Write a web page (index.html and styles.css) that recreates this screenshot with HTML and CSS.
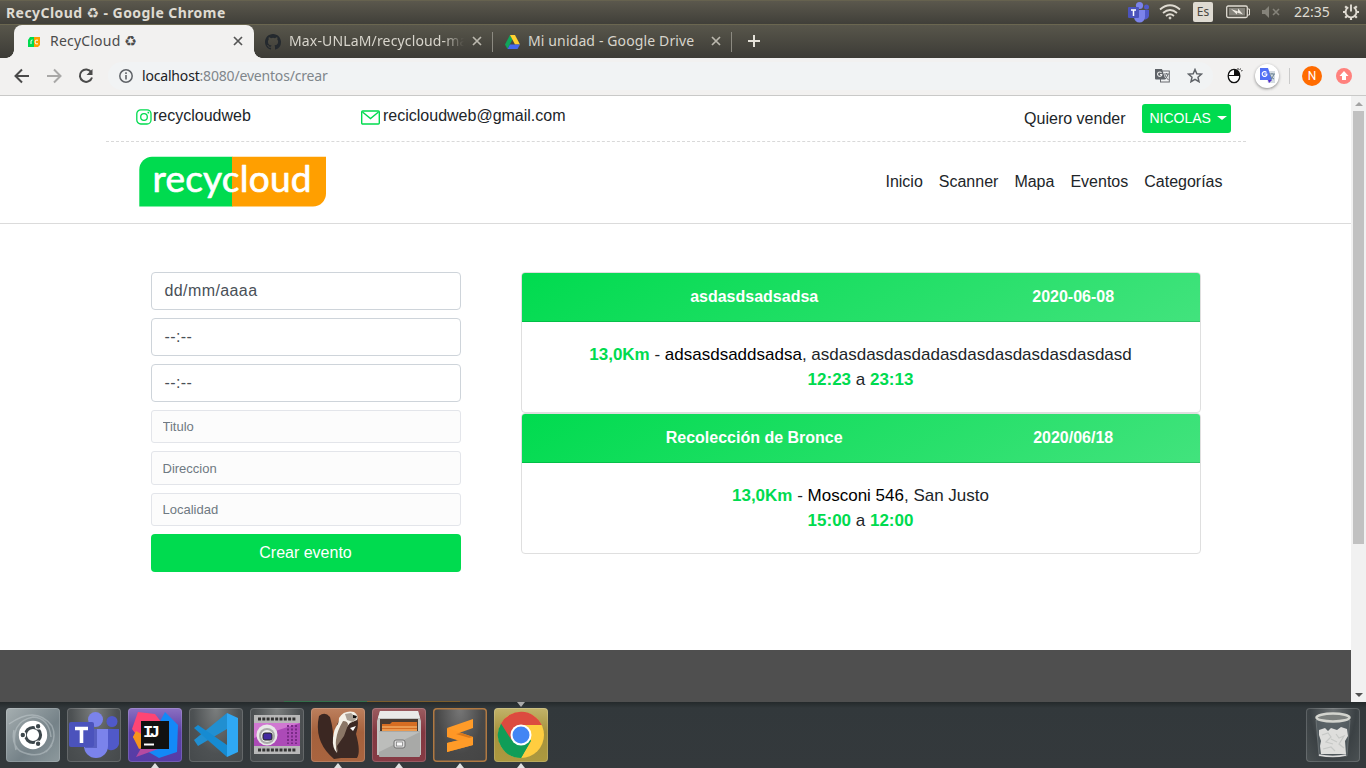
FILE: index.html
```html
<!DOCTYPE html>
<html lang="es">
<head>
<meta charset="utf-8">
<title>RecyCloud</title>
<link rel="stylesheet" href="styles.css">
</head>
<body>
<div class="desktop">
  <header class="titlebar">
    <span class="window-title">RecyCloud <i class="recycle">♻</i> - Google Chrome</span>
    <div class="indicators">
      <svg class="ind teams" width="24" height="22" viewBox="0 0 24 22"><circle cx="19.500" cy="6" r="2.500" fill="#5059c9"/><path d="M15 9h7v6a4 4 0 0 1-7 2z" fill="#5059c9"/><circle cx="12.500" cy="4.500" r="3.600" fill="#7b83eb"/><path d="M7 9h11v7a5.500 5.500 0 0 1-11 0z" fill="#7b83eb"/><rect x="1" y="6" width="11" height="11" rx="1" fill="#4b53bc"/><path d="M4 9h5M6.500 9v6" stroke="#fff" stroke-width="1.500"/></svg>
      <svg class="ind wifi" width="22" height="16" viewBox="0 0 22 16" fill="none" stroke="#dfdbd2" stroke-width="1.800"><path d="M1 5.500Q11-3 21 5.500M4 9Q11 3 18 9M7 12Q11 8.500 15 12"/><circle cx="11" cy="14" r="1" fill="#dfdbd2" stroke-width="1"/></svg>
      <span class="lang">Es</span>
      <svg class="ind battery" width="24" height="14" viewBox="0 0 24 14"><rect x=".7" y="1" width="20.600" height="11.500" rx="1.500" fill="none" stroke="#dfdbd2" stroke-width="1.300"/><path d="M22 4h1.500v6H22" fill="none" stroke="#dfdbd2"/><rect x="3" y="3" width="16" height="7.500" fill="#85837b"/><path d="M5 4l7 2.500V3.500l5 6-6-2v2z" fill="#eeeae2"/></svg>
      <svg class="ind sound" width="18" height="14" viewBox="0 0 18 14"><path d="M0 5h3l4-4v12L3 9H0z" fill="#85837a"/><path d="M11 4l6 6M17 4l-6 6" stroke="#85837a" stroke-width="1.600"/></svg>
      <span class="clock">22:35</span>
      <svg class="ind gear" width="18" height="18" viewBox="0 0 18 18" fill="none" stroke="#dfdbd2"><path d="M6.300 4.300a5.400 5.400 0 1 0 5.400 0M9 1.500v7" stroke-width="1.900"/><path d="M1 9h2.500M14.500 9H17M3.200 3.200l1.800 1.800M14.800 3.200L13 5M3.200 14.800L5 13M14.800 14.800L13 13M9 14.500V17" stroke-width="2.200"/></svg>
    </div>
  </header>

  <nav class="tabstrip">
    <div class="tab active">
      <svg width="14" height="12" viewBox="0 0 14 12"><path d="M3 1h4v10H1V4z" fill="#00db4f"/><path d="M7 1h6v8l-2 2H7z" fill="#ff9f00"/><path d="M4 8V5q0-1 1.500-1M11 4.200q-3-1-3 1.800t3 1.800" fill="none" stroke="#fff"/></svg>
      <span class="tab-label t1">RecyCloud <i class="recycle">♻</i></span>
      <svg class="close" width="10" height="10" viewBox="0 0 10 10"><path d="M1 1l8 8M9 1L1 9"/></svg>
    </div>
    <div class="tab second">
      <svg width="16" height="16" viewBox="0 0 16 16"><path fill="#24292e" d="M8 0C3.580 0 0 3.580 0 8c0 3.540 2.290 6.530 5.470 7.590.4.070.55-.17.55-.38 0-.19-.01-.82-.01-1.490-2.010.37-2.530-.49-2.690-.94-.09-.23-.48-.94-.82-1.130-.28-.15-.68-.52-.01-.53.63-.01 1.080.58 1.230.82.72 1.210 1.870.87 2.330.66.07-.52.28-.87.51-1.070-1.780-.2-3.640-.89-3.640-3.950 0-.87.31-1.590.82-2.150-.08-.2-.36-1.020.08-2.120 0 0 .67-.21 2.200.82a7.400 7.400 0 0 1 4 0c1.530-1.040 2.200-.82 2.200-.82.44 1.100.16 1.920.08 2.120.51.560.82 1.270.82 2.150 0 3.070-1.870 3.750-3.650 3.950.29.250.54.730.54 1.480 0 1.070-.01 1.930-.01 2.200 0 .21.15.46.55.38A8.010 8.010 0 0 0 16 8c0-4.420-3.580-8-8-8z"/></svg>
      <span class="tab-label faded">Max-UNLaM/recycloud-ma</span>
      <svg class="close" width="10" height="10" viewBox="0 0 10 10"><path d="M1 1l8 8M9 1L1 9"/></svg>
    </div>
    <div class="tab third">
      <svg width="15" height="14" viewBox="0 0 15 14"><path d="M5 0l2.500 4.500L2.500 14 0 9.500z" fill="#11a55a"/><path d="M5 0h5l5 9.500h-5z" fill="#ffd12f"/><path d="M5 9.500h10L12.500 14h-10z" fill="#4568ee"/></svg>
      <span class="tab-label t3">Mi unidad - Google Drive</span>
      <svg class="close" width="10" height="10" viewBox="0 0 10 10"><path d="M1 1l8 8M9 1L1 9"/></svg>
    </div>
    <svg class="newtab" width="12" height="12" viewBox="0 0 12 12"><path d="M6 0v12M0 6h12" stroke="#e5e2d9" stroke-width="2"/></svg>
  </nav>

  <div class="toolbar">
    <svg class="tb" width="16" height="16" viewBox="0 0 16 16"><path d="M15 8H2M8 1.500L1.500 8 8 14.500"/></svg>
    <svg class="tb dim" width="16" height="16" viewBox="0 0 16 16"><path d="M1 8h13M8 1.500L14.500 8 8 14.500"/></svg>
    <svg class="tb" width="16" height="16" viewBox="0 0 16 16"><path d="M13.300 4.300A6.200 6.200 0 1 0 14 9.500"/><path d="M14.500 1v6h-6z" fill="#4a4a4a" stroke="none"/></svg>
    <div class="omnibox">
      <svg width="14" height="14" viewBox="0 0 14 14"><circle cx="7" cy="7" r="6.200" fill="none" stroke="#5f6368" stroke-width="1.500"/><path d="M7 6v4.500M7 3.200V5" stroke="#5f6368" stroke-width="1.600"/></svg>
      <span class="url"><b>localhost</b>:8080/eventos/crear</span>
      <svg class="translate" width="15" height="15" viewBox="0 0 15 15"><rect x="5.500" y="3" width="8.800" height="11" fill="#f1f3f4" stroke="#686b70"/><path d="M0 1h7l3.500 10.500H1q-1 0-1-1z" fill="#5f6368"/><path d="M6.500 4.800A2.200 2.200 0 1 0 6.800 7V6.500H5" fill="none" stroke="#eee" stroke-width="1.100"/><path d="M9 6h5M11.500 5v1M13 6q-1 4-3 5M10 7q1 3 3.500 5" fill="none" stroke="#686b70"/></svg>
      <svg class="star" width="16" height="15" viewBox="0 0 16 15"><path d="M8 1.500l1.800 4.200 4.700.4-3.500 3.100 1 4.500-4-2.400-4 2.400 1-4.500L1.500 6.100l4.700-.4z" fill="none" stroke="#5f6368" stroke-width="1.500"/></svg>
    </div>
    <svg class="mouse" width="16" height="17" viewBox="0 0 16 17"><ellipse cx="7" cy="9" rx="5.800" ry="6.700" fill="#fff" stroke="#111" stroke-width="1.300"/><path d="M7 2.500v6h6A6 6 0 0 0 7 2.500z" fill="#111"/><path d="M1.500 8.500h11" stroke="#111"/><path d="M11 1v2M13.500 1.500l-.7 1.500M15.500 3.500l-1.500.5" stroke="#333"/></svg>
    <span class="ext"><svg width="17" height="17" viewBox="0 0 17 17"><path d="M6 4h10v12H9z" fill="#d5dce2"/><path d="M1 1h8l4 12H1z" fill="#5270f5"/><path d="M7.500 5.500a2.400 2.400 0 1 0 .3 2.500V7H5.300" fill="none" stroke="#fff" stroke-width="1.200"/><path d="M10 7h6M13 6v1M15 7q-1 4-4 6M11 8q1 3 4 4" fill="none" stroke="#6d8593"/><path d="M9 13h4l-3 3z" fill="#4d2bd0"/></svg></span>
    <span class="sep"></span>
    <span class="avatar">N</span>
    <span class="update"><svg width="10" height="10" viewBox="0 0 10 10"><path d="M5 0l4.500 5H7v4H3V5H.5z" fill="#fff"/></svg></span>
  </div>

  <div class="viewport">
    <main class="page">
      <div class="top-row">
        <span class="contact insta"><svg width="16" height="16" viewBox="0 0 16 16" fill="none" stroke="#00db4f" stroke-width="1.300"><rect x=".8" y=".8" width="14.200" height="14.200" rx="4"/><circle cx="8" cy="8" r="3.300"/><path d="M11.500 3.500h1v1"/></svg>recycloudweb</span>
        <span class="contact mail"><svg width="19" height="15" viewBox="0 0 19 15" fill="none" stroke="#00db4f" stroke-width="1.400"><rect x=".7" y="1" width="17.600" height="13" rx="1"/><path d="M1.500 2l8 6.500 8-6.500"/></svg>recicloudweb@gmail.com</span>
        <span class="sell">Quiero vender</span>
        <button class="user">NICOLAS<i class="caret"></i></button>
      </div>
      <div class="brand-band">
        <div class="brand-row">
          <svg class="logo" width="188" height="51" viewBox="0 0 188 51"><path d="M13 .7H93.500V50.500H.3V13.500A13 13 0 0 1 13 .7z" fill="#00db4f"/><path d="M93 .7h94v36.800a13 13 0 0 1-13 13H93z" fill="#ff9f00"/><text class="logo-text" x="13.500" y="35.700" textLength="159">recycloud</text></svg>
          <nav class="menu"><a>Inicio</a><a>Scanner</a><a>Mapa</a><a>Eventos</a><a>Categorías</a></nav>
        </div>
      </div>
      <div class="content">
        <form class="form">
          <div class="field date">dd/mm/aaaa</div>
          <div class="field">--:--</div>
          <div class="field">--:--</div>
          <input class="small" placeholder="Titulo">
          <input class="small street" placeholder="Direccion">
          <input class="small" placeholder="Localidad">
          <button class="submit" type="button">Crear evento</button>
        </form>
        <section class="cards">
          <article class="card">
            <h2 class="card-head"><span>asdasdsadsadsa</span><span>2020-06-08</span></h2>
            <div class="card-body"><p><b>13,0Km</b> - <em>adsasdsaddsadsa</em>, asdasdasdasdadasdasdasdasdasdasdasd</p><p><b>12:23</b> a <b>23:13</b></p></div>
          </article>
          <article class="card">
            <h2 class="card-head"><span>Recolección de Bronce</span><span>2020/06/18</span></h2>
            <div class="card-body"><p><b>13,0Km</b> - <em>Mosconi 546</em>, San Justo</p><p><b>15:00</b> a <b>12:00</b></p></div>
          </article>
        </section>
      </div>
      <footer class="footer"><span class="footer-line"></span></footer>
    </main>
    <div class="scrollbar"><i class="up"></i><i class="thumb"></i><i class="down"></i></div>
  </div>

  <div class="dock">
    <span class="tile dash"><svg viewBox="0 0 54 54"><g fill="none" stroke="#d3dadd" stroke-opacity=".4" stroke-width="1.500"><path d="M10 42Q3 14 27 9q16 1 18 20M3 16Q30-3 46 18 52 32 40 44M46 37Q35 53 14 43 5 36 8 22"/></g><circle cx="27" cy="27" r="14.200" fill="#fff"/><circle cx="27" cy="27" r="7.600" fill="none" stroke="#3d474c" stroke-width="3"/><g fill="#3d474c" stroke="#fff" stroke-width="1.200"><circle cx="16.800" cy="27" r="2.800"/><circle cx="32.100" cy="18.200" r="2.800"/><circle cx="32.100" cy="35.800" r="2.800"/></g></svg></span>
    <span class="tile glass"><svg viewBox="0 0 54 54"><circle cx="45" cy="13.500" r="5.500" fill="#5059c9"/><path d="M36 21h16v15a8 8 0 0 1-12 5z" fill="#5059c9"/><circle cx="28.500" cy="11.500" r="7.500" fill="#7b83eb"/><path d="M17 21h24v17a12 12 0 0 1-24 0z" fill="#7b83eb"/><path d="M20 21h10v19H18z" fill="#4047a5" opacity=".6"/><rect x="2" y="14" width="25" height="25" rx="2" fill="#4b53bc"/><path d="M8 20.500h13M14.500 20v15" stroke="#fff" stroke-width="3.600"/></svg></span>
    <span class="tile idea"><svg viewBox="0 0 54 54"><path d="M37 4l13 13-1 27-18 6-14-8z" fill="#1389f7"/><path d="M8 24l8 15-5 2-6-12z" fill="#f7941d"/><path d="M10 4l17 2 10 13-8 20-13-2-12-16z" fill="#fe4574"/><path d="M5 29l3-6 7 4-2 14z" fill="#f7941d"/><path d="M8 49l8-14 14 6z" fill="#b54aa1"/><rect x="13" y="13" width="28" height="28" fill="#111"/><text class="ij" x="15" y="29" textLength="17">IJ</text><path d="M16 36.500h10" stroke="#fff" stroke-width="2"/></svg><i class="run"></i></span>
    <span class="tile glass"><svg viewBox="0 0 54 54"><path d="M38 5L5 32l4 6 29-17z" fill="#218fd1"/><path d="M9 17l-4 3 33 29V37z" fill="#168bd2"/><path d="M38 5l11 5v34l-11 5z" fill="#2fa8f4"/></svg></span>
    <span class="tile glass"><svg viewBox="0 0 54 54"><rect x="4" y="7" width="46" height="39" fill="#b8b8b8"/><path d="M8 11h38M8 42h38" stroke="#333" stroke-width="3" stroke-dasharray="3 1.300"/><rect x="4" y="15" width="46" height="23" fill="#ac4ab7"/><path d="M4 15h46L4 30z" fill="#d078d1"/><path d="M38 17v19M42 17v19M46 17v19" stroke="#792b86" stroke-width="2" stroke-dasharray="2 1.500"/><circle cx="17" cy="27" r="10.500" fill="#e8e8e8"/><circle cx="17" cy="28" r="8" fill="#aaa"/><circle cx="17" cy="28" r="6" fill="#eee"/><rect x="13" y="25" width="9" height="7" rx="2" fill="#432aa0" stroke="#222"/></svg></span>
    <span class="tile beaver"><svg viewBox="0 0 54 54"><path d="M8 8q6-5 11 1 4 14 3 26 1 11 8 15l-7 1Q5 36 7 14z" fill="#3b2722"/><path d="M30 9Q36 1 45 6q4 8 0 20 5 18 1 24H29q-8-2-7-13 0-15 8-28z" fill="#3c2924"/><path d="M28 10Q33 2 43 4q5 3 3 8l-7 3-8 10q-6 8-6 14l1 6q-5-5-4-15 1-10 5-14 1-3 1-6z" fill="#f5f1e8"/><path d="M32 13q5 0 5 4l-4 11-7 10 1 7q-3-6-2-13 1-9 7-19z" fill="#8a7666"/><path d="M34 6l6-1 6 5-4 4-6-2z" fill="#aaa095"/><path d="M42 7l4 1-1 2h-3z" fill="#111"/><path d="M39 20l6-2-3 5z" fill="#fff"/></svg><i class="run"></i></span>
    <span class="tile files"><svg viewBox="0 0 54 54"><path d="M8 3h38l3 10v34H5V13z" fill="#c4c4c2"/><path d="M8 3h38l2 7H6z" fill="#e9e9e7"/><rect x="8" y="11" width="38" height="14" fill="#493b32"/><path d="M10 16h8l2-2h25v9H10z" fill="#d66d22"/><path d="M10 19h35M10 22h35" stroke="#ffc77f"/><rect x="7" y="23" width="41" height="26" rx="1" fill="#a8a9a7"/><path d="M7 24h41L7 44z" fill="#bcbdbb"/><rect x="22" y="32" width="11" height="8" rx="2" fill="#ddd" stroke="#707070"/><rect x="24.500" y="34" width="6" height="4" fill="#f8f8f8" stroke="#777" stroke-width=".7"/></svg><i class="run"></i></span>
    <span class="tile sublime"><svg viewBox="0 0 54 54"><path d="M14 20l26-9v9l-17 6z" fill="#ff9b28"/><path d="M14 20l26 9v8l-26-8z" fill="#ff9725"/><path d="M23 26l17 5v-2l-12-4z" fill="#d9771b"/><path d="M14 35l12-3 14 5-26 7z" fill="#f28a1d"/><path d="M14 35l26-6v8l-26 7z" fill="#ff9b28"/></svg><i class="run"></i></span>
    <span class="tile chrome"><svg viewBox="0 0 54 54"><circle cx="27" cy="27" r="23" fill="#ffcd40"/><path d="M27 27L7 15.500A23 23 0 0 0 27 50l10-17z" fill="#109d58"/><path d="M27 17h20.800A23 23 0 0 0 7 15.500L17.500 32z" fill="#dc4b3f"/><path d="M27 50l10-18-10-3-9 5z" fill="#109d58"/><circle cx="27" cy="27" r="10.500" fill="#fff"/><circle cx="27" cy="27" r="8.500" fill="#4285f4"/></svg><i class="run"></i><i class="run top"></i></span>
    <span class="tile glass trash"><svg viewBox="0 0 54 54"><path d="M10 12h34l-3 36H13z" fill="#5d686c" fill-opacity=".6" stroke="#a2a9a9" stroke-opacity=".35"/><path d="M13 22l6-2 3 3 3-3 6 2 4-3 6 2 1 7-3 5 1 13H15l-1-8 1-5-2-6z" fill="#dededc"/><path d="M16 27l6-2 3 4-5 5 7 2M30 26l3 4 5-2-5 8 5 4M25 31l6 3M17 41l8-2 4 4" fill="none" stroke="#c6c8c6" stroke-width="1.200"/><ellipse cx="27" cy="9.500" rx="16.500" ry="4" fill="#7b7f7d" stroke="#d3d4ce" stroke-width="2.500"/><path d="M13 47q14 3 27 0" fill="none" stroke="#ddd" stroke-width="1.500"/></svg></span>
  </div>
</div>
</body>
</html>
```
FILE: styles.css
```css
* { box-sizing: border-box; }
body { margin: 0; overflow: hidden; font-family: "Liberation Sans", Arial, sans-serif; font-size: 16px; line-height: 24px; color: #212529; }
svg { display: block; flex: none; }
i, em { font-style: normal; }
p, h2 { margin: 0; }
.desktop { width: 1366px; height: 768px; display: flex; flex-direction: column; }
.recycle { font-family: "DejaVu Sans", sans-serif; font-weight: 400; }

.titlebar { height: 24px; flex: none; display: flex; align-items: center; justify-content: space-between; padding: 0 7px 0 6px; background: linear-gradient(#5b584d, #403f39); border-top: 1px solid #66624f; font-family: "Noto Sans", sans-serif; color: #dfdbd2; }
.window-title { font-size: 14px; font-weight: 700; letter-spacing: .43px; }
.window-title .recycle { font-size: 14px; }
.indicators { display: flex; align-items: center; margin-top: -2px; }
.lang { width: 20px; height: 20px; margin-left: 12px; border-radius: 2px; background: #dfdbd2; color: #4a4840; font-size: 12px; line-height: 20px; text-align: center; }
.wifi { margin-left: 8px; }
.battery { margin-left: 13px; }
.sound { margin-left: 12px; }
.clock { margin-left: 14px; width: 37px; font-size: 14px; white-space: nowrap; }
.gear { margin-left: 11px; margin-right: -1px; }

.tabstrip { height: 34px; flex: none; display: flex; align-items: center; padding-left: 14px; background: linear-gradient(#58564b, #3c3b36); border-top: 1px solid #6a6650; font-family: "Noto Sans", sans-serif; font-size: 14px; color: #d8d5cc; }
.tab { height: 33px; display: flex; align-items: center; }
.tab-label { white-space: nowrap; overflow: hidden; margin-top: -2px; }
.t1 { letter-spacing: .2px; }
.t3 { letter-spacing: .13px; }
.tab .close { margin-left: auto; margin-top: -1px; fill: none; stroke: #bbb8ae; stroke-width: 1.7; }
.active { position: relative; width: 240px; padding: 0 11px 0 13px; gap: 9px; background: #f2f1f0; color: #4c4c4c; border-radius: 8px 8px 0 0; }
.active::before, .active::after { content: ""; position: absolute; bottom: 0; width: 8px; height: 8px; }
.active::before { left: -8px; background: radial-gradient(circle at 0 0, transparent 7.5px, #f2f1f0 8px); }
.active::after { right: -8px; background: radial-gradient(circle at 100% 0, transparent 7.5px, #f2f1f0 8px); }
.active .close { stroke: #555; }
.second, .third { height: 20px; border-right: 1px solid #8c8a81; }
.second { width: 239px; padding: 0 10px 0 11px; gap: 8px; }
.faded { width: 176px; letter-spacing: .15px; -webkit-mask-image: linear-gradient(90deg, #000 88%, transparent); mask-image: linear-gradient(90deg, #000 88%, transparent); }
.third { width: 239px; padding: 0 10px 0 12px; gap: 8px; }
.newtab { margin-left: 16px; margin-top: -2px; }

.toolbar { height: 38px; flex: none; display: flex; align-items: center; padding: 0 14px 2px; background: #f2f1f0; border-bottom: 1px solid #c9c9c8; font-family: "Noto Sans", sans-serif; }
.tb { fill: none; stroke: #4a4a4a; stroke-width: 2; margin-right: 16px; }
.dim { stroke: #a9a8a7; }
.omnibox { width: 1105px; height: 28px; display: flex; align-items: center; padding: 0 10px 0 11px; margin-left: -2px; border-radius: 14px; background: #f1f3f4; }
.url { margin-left: 9px; font-size: 14px; letter-spacing: -0.18px; color: #80868b; }
.url b { font-weight: 400; color: #202124; }
.translate { margin-left: auto; }
.star { margin-left: 17px; }
.mouse { margin-left: 14px; }
.ext { width: 24px; height: 24px; margin-left: 12px; border-radius: 50%; background: #fff; box-shadow: 0 1px 3px #888; display: grid; place-items: center; }
.sep { width: 1px; height: 16px; margin-left: 10px; background: #cacaca; }
.avatar { width: 20px; height: 20px; margin-left: 12px; border-radius: 50%; background: #ff6b00; color: #fff; font: 12px/20px Roboto, sans-serif; text-align: center; }
.update { width: 16px; height: 16px; margin-left: 14px; border-radius: 50%; background: #ff817d; display: grid; place-items: center; }

.viewport { height: 606px; flex: none; display: flex; background: #fff; }
.page { width: 1351px; display: flex; flex-direction: column; }
.top-row { width: 1140px; height: 46px; margin: 0 auto; padding: 0 15px 0 30px; display: flex; align-items: flex-start; border-bottom: 1px dashed #d9d9d9; }
.contact { display: flex; align-items: center; padding-top: 8px; }
.insta { width: 225px; gap: 1.5px; }
.insta svg, .mail svg { margin-top: 2px; }
.mail { gap: 3.5px; }
.sell { margin-left: auto; padding-top: 11px; }
.user { width: 89px; height: 29px; margin: 8px 0 0 16px; padding: 0 4px 1px 8px; display: flex; align-items: center; justify-content: space-between; border: 0; border-radius: 3px; background: #00db4f; color: #fff; font: 14px "Liberation Sans", sans-serif; }
.caret { border: 4.5px solid transparent; border-top-color: #fff; border-bottom: 0; border-left-width: 5px; border-right-width: 5px; }
.brand-band { height: 82px; border-bottom: 1px solid #dbdbdb; }
.brand-row { width: 1140px; margin: 0 auto; padding: 14px 23px 0 33px; display: flex; justify-content: space-between; align-items: center; }
.logo-text { font: 37px Lato, sans-serif; fill: #fff; stroke: #fff; stroke-width: .7px; stroke-linejoin: round; }
.menu { display: flex; gap: 16px; padding-top: 1px; }

.content { width: 1050px; height: 426px; margin: 0 auto; padding-top: 48px; display: flex; align-items: flex-start; gap: 60px; }
.form { width: 310px; display: flex; flex-direction: column; gap: 8px; }
.field { height: 38px; padding: 6px 13px; border: 1px solid #ced4da; border-radius: 4px; color: #495057; letter-spacing: .4px; }
.small { width: 100%; height: 33.33px; padding: 0 11px; border: 1px solid #e3e5ea; border-radius: 3px; background: #fcfcfc; font: 13px "Liberation Sans", sans-serif; }
.small::placeholder { color: #6f7982; opacity: 1; }
.street { padding-top: 1px; }
.submit { height: 38px; border: 0; border-radius: 4px; background: #00db4f; color: #fff; font: 16px "Liberation Sans", sans-serif; }
.cards { width: 680px; }
.card { height: 141px; border: 1px solid #dfdfdf; border-radius: 4px; overflow: hidden; text-align: center; }
.card-head { height: 49px; padding: 12px 20px; display: grid; grid-template-columns: 2fr 1fr; background: linear-gradient(150deg, #00db4f, #42e37d); border-bottom: 1px solid rgba(0, 0, 0, .125); color: #fff; font-size: 16px; line-height: 24px; }
.card-body { padding: 20px; font-size: 17px; line-height: 25px; }
.card-body b { color: #00db4f; }
.card-body em { color: #000; }
.footer { flex: 1; background: #4f4f4f; display: flex; align-items: flex-end; }
.footer-line { width: 176px; height: 1px; margin-left: 284px; background: linear-gradient(90deg, #34704a 47%, #7b5d2c 47%); }
.scrollbar { width: 15px; background: #f1f1f1; display: flex; flex-direction: column; align-items: center; }
.up { margin-top: 6px; border: 4px solid transparent; border-bottom-color: #a3a3a3; border-top: 0; }
.thumb { width: 11px; height: 433px; margin-top: 5px; background: #c1c1c1; }
.down { margin: auto 0 5px; border: 4px solid transparent; border-top-color: #505050; border-bottom: 0; }

.dock { height: 66px; flex: none; display: flex; gap: 7px; padding: 6px; background: linear-gradient(#24292b, #32383b 6px, #34393c); }
.tile { position: relative; width: 54px; height: 54px; border-radius: 4px; box-shadow: inset 0 0 0 1px rgba(255, 255, 255, .16); }
.tile svg { width: 54px; height: 54px; }
.dash { background: linear-gradient(135deg, #a6afb1, #758288 60%, #8d999d); }
.glass { background: radial-gradient(ellipse at 50% 0, #7b7e7e, #4d5153 60%, #45494b); }
.idea { background: linear-gradient(#8c70c2, #5b3fa6 45%, #563ca6); }
.beaver { background: linear-gradient(#bd805e, #a5613c 45%, #a9643f); }
.files { background: linear-gradient(#9b5c60, #823740 45%, #863b45); }
.sublime { background: radial-gradient(ellipse at 50% 0, #777, #484848 60%, #444); box-shadow: inset 0 0 0 1.5px #b07942; }
.chrome { background: linear-gradient(#c2b36a, #a6923c 45%, #ad993f); }
.trash { margin-left: auto; background: radial-gradient(ellipse at 50% 0, #6b7072, #3b4144 60%, #4b5153); }
.ij { font: bold 17px "Liberation Mono", monospace; fill: #fff; }
.run { position: absolute; left: 23px; bottom: -6px; border: 4px solid transparent; border-bottom: 5px solid #e0e0e0; border-top: 0; }
.run.top { bottom: auto; top: -6px; border: 4px solid transparent; border-top: 5px solid #aaa; border-bottom: 0; }
```
